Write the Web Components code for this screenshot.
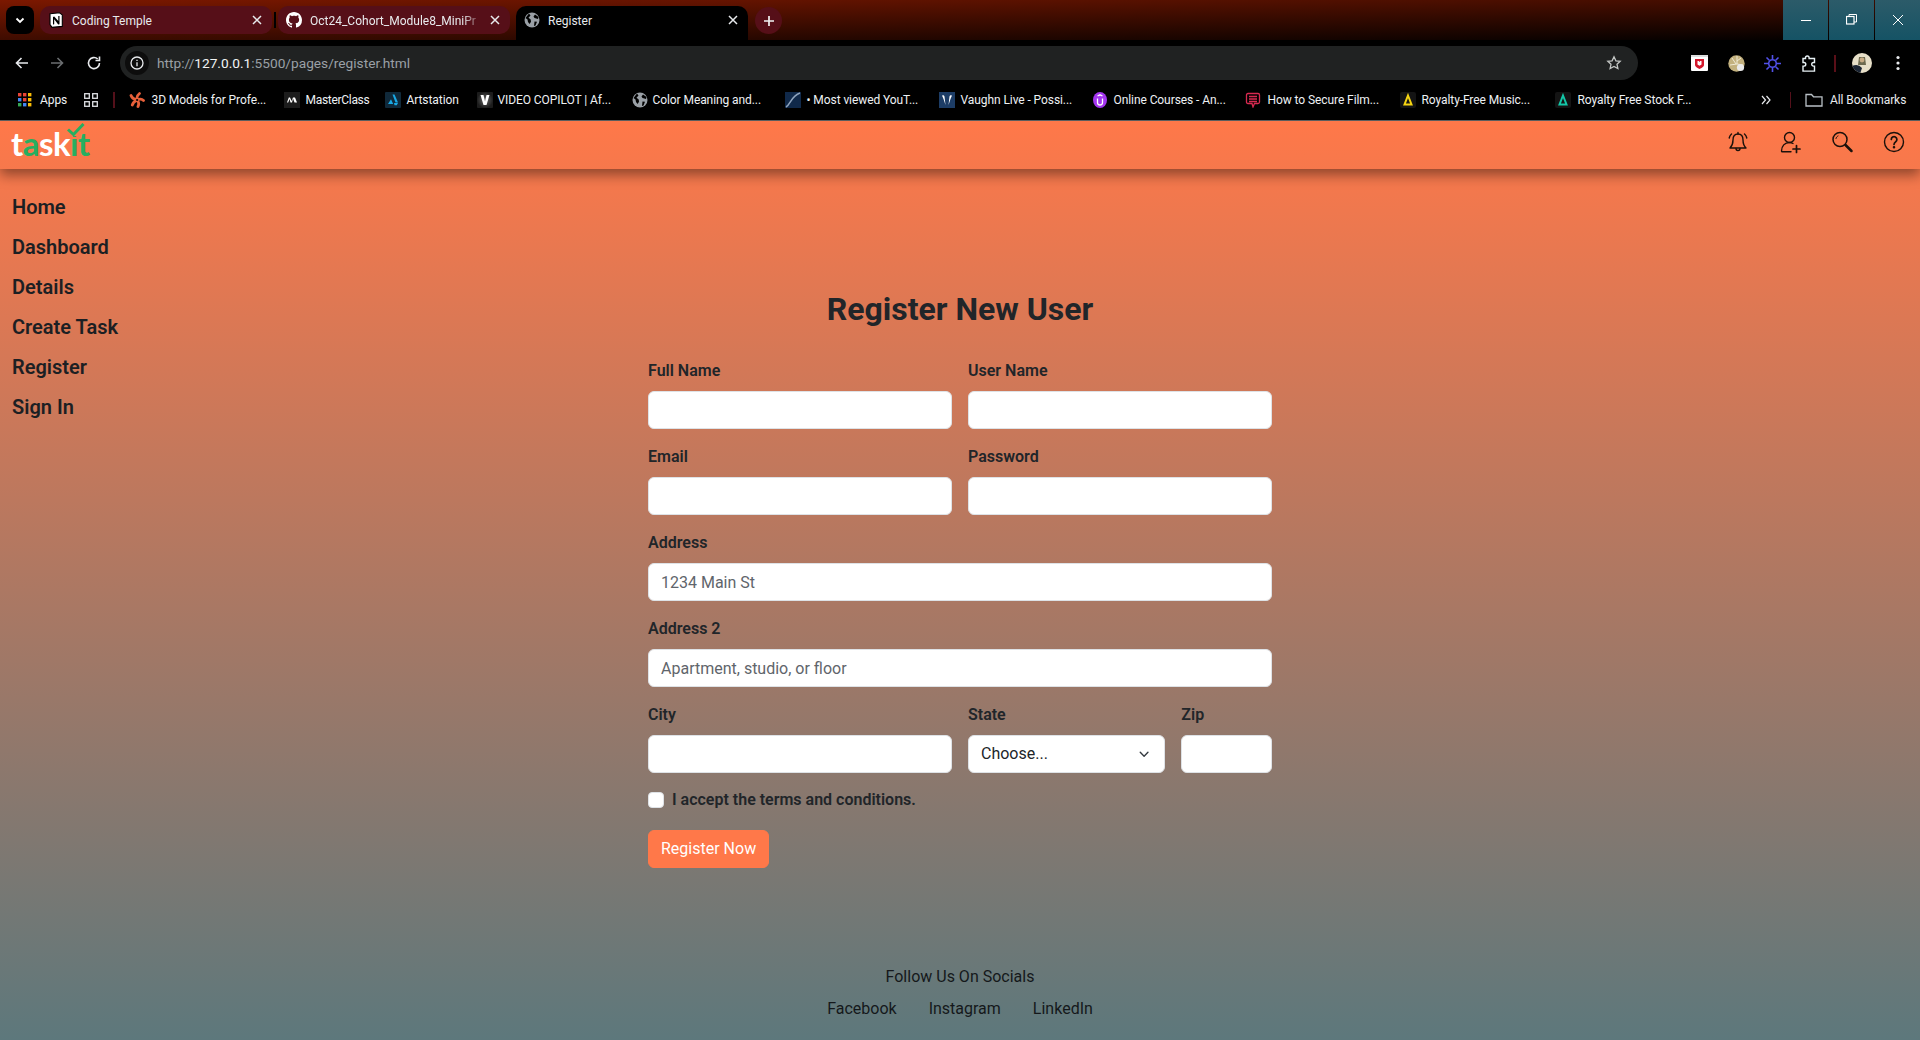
<!DOCTYPE html>
<html lang="en">
<head>
<meta charset="utf-8">
<title>Register</title>
<style>
html,body{margin:0;padding:0;height:100%;}
body{width:1920px;height:1040px;overflow:hidden;display:flex;flex-direction:column;background:#000;font-family:Roboto,"Liberation Sans",sans-serif;}
</style>
</head>
<body>
<browser-chrome></browser-chrome>
<site-page>
  <site-nav slot="nav"></site-nav>
  <side-menu slot="side"></side-menu>
  <register-form slot="main"></register-form>
  <site-footer slot="foot"></site-footer>
</site-page>
<script>
const ui='Roboto,"Liberation Sans",sans-serif';
function define(name,html,cls){
  const t=document.createElement('template');t.innerHTML=html;
  customElements.define(name,class extends HTMLElement{
    constructor(){super();this.attachShadow({mode:'open'}).appendChild(t.content.cloneNode(true));}
  });
}

const globe=(c='#9aa0a6',k='#000')=>`<svg width="16" height="16" viewBox="0 0 16 16" style="flex:none"><circle cx="8" cy="8" r="7.5" fill="${c}"/><path d="M5 1.500l1.500 2-2 2.200 2.200 1.800.3 2.200-1.400 2.300-1.600-2-.5-2.500L1.500 6zM11 2.500l-1.500 2 1 1.500 3.500 1 .5-2zM10.500 9.500l2.500.3-1.500 3.700-1.500.5z" fill="${k}"/></svg>`;

function bm(icon,text,iw,tw,gap,ml,ls){
  return `<a class="bm" style="margin-left:${ml}px"><span class="ic" style="width:${iw}px">${icon}</span>${text?`<span class="tx" style="margin-left:${gap}px;width:${tw}px${ls?';letter-spacing:'+ls+'px':''}">${text}</span>`:''}</a>`;
}
const appsIcon=`<svg width="14" height="14" viewBox="0 0 14 14">${[['#ea4335',0,0],['#ea4335',5,0],['#fbbc04',10,0],['#4285f4',0,5],['#ea4335',5,5],['#fbbc04',10,5],['#34a853',0,10],['#4285f4',5,10],['#fbbc04',10,10]].map(a=>`<rect x="${a[1]}" y="${a[2]}" width="3.4" height="3.4" fill="${a[0]}"/>`).join('')}</svg>`;
const gridIcon=`<svg width="14" height="14" viewBox="0 0 14 14" fill="none" stroke="#dfe1e5" stroke-width="1.3"><rect x=".7" y=".7" width="4.6" height="4.6"/><rect x="8.7" y=".7" width="4.6" height="4.6"/><rect x=".7" y="8.700" width="4.6" height="4.6"/><rect x="8.7" y="8.700" width="4.6" height="4.6"/></svg>`;
const starfish=`<svg width="16" height="16" viewBox="0 0 16 16" fill="none" stroke="#e8603a" stroke-width="2.800" stroke-linecap="round"><path d="M8 7.500C7.500 5 8.500 3 10.500 1.500M8.500 8c2.500-1.500 4.500-1 6 .5M8.500 8.500c1.500 2 1.500 4 .5 6M7.500 8.500c-2 .8-3.500 2.200-4.200 4.500M7.500 8C5.500 7.500 3 6 2 3.500"/><circle cx="8" cy="8" r=".6" stroke="#000" stroke-width="1"/></svg>`;
const mc=`<svg width="16" height="16" viewBox="0 0 16 16"><rect width="16" height="16" fill="#1c1c1c"/><path d="M3 10.500h1.200L5.500 7l1 3.500h1.500L9 6.500l1.500 4H13L11 5.500h-2L7.500 9 6 5.500H4.800z" fill="#fff"/></svg>`;
const art=`<svg width="16" height="16" viewBox="0 0 16 16"><rect width="16" height="16" rx="1" fill="#10293a"/><path d="M7.500 2.500h2l3.500 8h-2.500zM3 12l3-4.700 2.200 4.700zM9 11h4l-1.200 2.300H9.500z" fill="#19a9e5"/></svg>`;
const vc=`<svg width="16" height="16" viewBox="0 0 16 16"><defs><radialGradient id="vg"><stop offset="0" stop-color="#6a6a6a"/><stop offset="1" stop-color="#1c1c1c"/></radialGradient></defs><rect width="16" height="16" rx="1" fill="url(#vg)"/><path d="M3.500 3h3L8 9.500 9.500 3h3L9.500 13h-3z" fill="#fff"/></svg>`;
const chart=`<svg width="16" height="16" viewBox="0 0 16 16"><rect width="16" height="16" fill="#10294a"/><path d="M1 15C6 12 6 4 15 1" fill="none" stroke="#8fa4bd" stroke-width="1.500"/></svg>`;
const vl=`<svg width="16" height="16" viewBox="0 0 16 16"><rect width="16" height="16" fill="#1d3d66"/><path d="M3 3.500q2-1 2.500 1L6.500 13 4.500 7zM13 3.500q-2-1-2.500 1L9.500 13l2-6z" fill="#fff"/></svg>`;
const udemy=`<svg width="14" height="16" viewBox="0 0 14 16"><ellipse cx="7" cy="8" rx="7" ry="8" fill="#a435f0"/><path d="M4.500 6.500v4a2.500 2.500 0 0 0 5 0v-4M4.500 4L7 2.800 9.500 4" fill="none" stroke="#fff" stroke-width="1.300"/></svg>`;
const secure=`<svg width="16" height="16" viewBox="0 0 16 16" fill="none" stroke="#d72a50" stroke-width="1.300"><path d="M3 1.500h10q1.500 0 1.500 1.500v7q0 1.500-1.500 1.500H9.500L8 15l-1-3.500H3q-1.500 0-1.500-1.500V3q0-1.500 1.500-1.500zM4 4.500h8M4 7h8M4 9.500h8"/></svg>`;
const tri=c=>`<svg width="16" height="16" viewBox="0 0 16 16"><rect width="16" height="16" rx="2" fill="#141414"/><path d="M8 3.500l3.500 9h-7z" fill="none" stroke="${c}" stroke-width="2"/></svg>`;
const closeX=`<svg width="10" height="10" viewBox="0 0 10 10" stroke="#e8eaed" stroke-width="1.500"><path d="M1 1l8 8M9 1l-8 8"/></svg>`;

define('browser-chrome',`
<style>
:host{display:block;flex:none;font-family:${ui};color:#e8eaed;background:#000;height:120px;}
.strip{height:40px;display:flex;background:linear-gradient(to bottom right,#7c1800,#000);}
.chev{width:28px;height:28px;margin:6px 6px 0 6px;background:#000;border-radius:8px;display:flex;align-items:center;justify-content:center;flex:none;}
.tab{width:232px;height:28px;margin-top:6px;background:#560f18;border-radius:10px;display:flex;align-items:center;box-sizing:border-box;padding:0 0 0 8px;font-size:12px;flex:none;}
.tab .t{margin-left:8px;flex:1;white-space:nowrap;min-width:0;padding-top:1px;}
.tab .fade{-webkit-mask-image:linear-gradient(to right,#000 88%,transparent 100%);mask-image:linear-gradient(to right,#000 88%,transparent 100%);}
.tab .x{width:24px;display:flex;justify-content:center;flex:none;margin-right:3px;}
.sep{width:2px;height:16px;background:#000;margin:12px 2px 0 2px;flex:none;}
.tab.active{background:#000;height:34px;border-radius:10px 10px 0 0;margin-left:6px;align-items:flex-start;}
.tab.active .inner{display:flex;align-items:center;width:100%;height:28px;}
.plus{width:27px;height:27px;margin:7px 0 0 7px;border-radius:50%;background:#560f18;display:flex;align-items:center;justify-content:center;flex:none;}
.fill{flex:1;}
.win{width:45px;margin-left:1px;height:40px;background:linear-gradient(#2c5b69,#155365);display:flex;align-items:center;justify-content:center;flex:none;}
.bar{height:40px;display:flex;align-items:flex-start;background:#000;}
.nb{width:24px;height:24px;margin-top:11px;display:flex;align-items:center;justify-content:center;flex:none;}
.url{width:1518px;height:34px;margin:6px 0 0 14px;background:#202222;border-radius:17px;display:flex;align-items:center;flex:none;box-sizing:border-box;padding:0 16px 0 5px;font-size:13.7px;color:#9aa0a6;}
.url .info{width:24px;height:24px;border-radius:50%;background:#0d0d0d;display:flex;align-items:center;justify-content:center;flex:none;margin-right:8px;}
.url b{font-weight:400;color:#f1f3f4;}
.url .addr{flex:1;white-space:nowrap;}
.ext{height:46px;display:flex;align-items:center;margin-left:53px;}
.ext>*{flex:none;}
.marks{height:40px;display:flex;align-items:center;background:#000;font-size:12px;letter-spacing:-.08px;box-sizing:border-box;padding-left:18px;}
.bm{display:flex;align-items:center;flex:none;color:#eef1f4;}
.ic{display:flex;align-items:center;justify-content:center;flex:none;}
.tx{white-space:nowrap;display:block;flex:none;}
.vsep{width:1.500px;height:16px;background:#54101a;flex:none;}
</style>
<div class="strip">
  <div class="chev"><svg width="12" height="12" viewBox="0 0 12 12" fill="none" stroke="#fff" stroke-width="1.800"><path d="M2.500 4.500L6 8l3.500-3.500"/></svg></div>
  <div class="tab"><svg width="16" height="16" viewBox="0 0 16 16" style="flex:none"><path d="M2 1.700l9.500-1 2.800 2.200v11.500l-10.300.9-2-2.800z" fill="#fff" stroke="#000" stroke-width="1.100"/><path d="M5 5v7.500l1.200-.2V7.200l4 5.300 1.300-.2V4l-1.200.1v5L6.200 4.600z" fill="#000"/></svg><span class="t">Coding Temple</span><span class="x">${closeX}</span></div>
  <div class="sep"></div>
  <div class="tab" style="margin-left:0"><svg width="16" height="16" viewBox="0 0 16 16" style="flex:none"><path fill="#fff" d="M8 0C3.580 0 0 3.580 0 8c0 3.540 2.290 6.530 5.470 7.590.4.070.55-.17.55-.38 0-.19-.01-.82-.01-1.490-2.010.37-2.530-.49-2.690-.94-.09-.23-.48-.94-.82-1.130-.28-.15-.68-.52-.01-.53.630-.01 1.080.58 1.230.82.720 1.210 1.870.870 2.330.660.070-.520.280-.870.510-1.070-1.780-.2-3.640-.89-3.640-3.950 0-.870.310-1.590.820-2.150-.080-.2-.360-1.020.080-2.120 0 0 .670-.210 2.200.820.640-.180 1.320-.270 2-.270s1.360.090 2 .270c1.530-1.040 2.200-.820 2.200-.820.440 1.100.160 1.920.080 2.120.510.560.820 1.270.820 2.150 0 3.070-1.870 3.750-3.650 3.950.290.250.540.730.540 1.480 0 1.070-.010 1.930-.010 2.200 0 .210.150.460.550.380A8.010 8.010 0 0 0 16 8c0-4.420-3.580-8-8-8z"/></svg><span class="t fade">Oct24_Cohort_Module8_MiniPr</span><span class="x">${closeX}</span></div>
  <div class="tab active"><div class="inner">${globe()}<span class="t">Register</span><span class="x">${closeX}</span></div></div>
  <div class="plus"><svg width="12" height="12" viewBox="0 0 12 12" stroke="#f1f3f4" stroke-width="1.700"><path d="M6 1v10M1 6h10"/></svg></div>
  <div class="fill"></div>
  <div class="win" style="margin-left:0"><svg width="12" height="12" viewBox="0 0 12 12" stroke="#fff" stroke-width="1"><path d="M1 6.500h10"/></svg></div>
  <div class="win"><svg width="12" height="12" viewBox="0 0 12 12" fill="none" stroke="#fff" stroke-width="1"><rect x=".5" y="2.500" width="7.500" height="7.500" stroke-width="1.200"/><path d="M3 2.500V.5h7.500V8H8"/></svg></div>
  <div class="win"><svg width="12" height="12" viewBox="0 0 12 12" stroke="#fff" stroke-width="1"><path d="M1 1l10 10M11 1L1 11"/></svg></div>
</div>
<div class="bar">
  <div class="nb" style="margin-left:10px"><svg width="16" height="16" viewBox="0 0 16 16" fill="none" stroke="#e8eaed" stroke-width="1.600"><path d="M14 8H2.500M7.500 3L2.500 8l5 5"/></svg></div>
  <div class="nb" style="margin-left:11px"><svg width="16" height="16" viewBox="0 0 16 16" fill="none" stroke="#6b6e70" stroke-width="1.600"><path d="M2 8h11.500M8.500 3l5 5-5 5"/></svg></div>
  <div class="nb" style="margin-left:13px"><svg width="16" height="16" viewBox="0 0 16 16" fill="none" stroke="#e8eaed" stroke-width="1.600"><path d="M13.500 8A5.500 5.500 0 1 1 11.700 4"/><path d="M13.500 1.500v4h-4" /></svg></div>
  <div class="url">
    <span class="info"><svg width="14" height="14" viewBox="0 0 14 14" fill="none" stroke="#e8eaed" stroke-width="1.300"><circle cx="7" cy="7" r="6"/><path d="M7 6.200v4M7 3.800v1.200"/></svg></span>
    <span class="addr">http://<b>127.0.0.1</b>:5500/pages/register.html</span>
    <svg width="16" height="16" viewBox="0 0 16 16" fill="none" stroke="#c4c7c5" stroke-width="1.300"><path d="M8 1.800l1.900 4 4.300.5-3.200 3 .9 4.300L8 11.500l-3.900 2.100.9-4.300-3.200-3 4.300-.5z"/></svg>
  </div>
  <div class="ext">
    <svg width="18" height="18" viewBox="0 0 18 18"><rect y="1" width="17" height="16" rx="1" fill="#fff"/><rect y="1" width="17" height="2" fill="#ddd"/><path d="M4 5h9v6q0 2-4.500 4Q4 13 4 11z" fill="#d3182c"/><path d="M6.500 7h1.200l.8 1 .8-1h1.200v3.500l-2 1.200-2-1.200z" fill="#fff"/></svg>
    <svg style="margin-left:19px" width="17" height="17" viewBox="0 0 17 17"><circle cx="8.500" cy="8.500" r="8.200" fill="#c3b17e"/><path d="M9 1v8M9 6l4-3M9 9l6 1M4 3l4 6M2 10l7-1" stroke="#efe9d3" stroke-width="1" fill="none"/><circle cx="12.500" cy="12.500" r="3.600" fill="#e9e9e9"/></svg>
    <svg style="margin-left:19px" width="17" height="17" viewBox="0 0 17 17" fill="none" stroke="#5151e8" stroke-width="1.600"><circle cx="8.500" cy="8.500" r="3.800"/><path d="M8.500 0v4M8.500 13v4M0 8.500h4M13 8.500h4M2.500 2.500l2.800 2.800M11.700 11.700l2.800 2.800M14.500 2.500l-2.800 2.800M5.300 11.700l-2.800 2.800"/></svg>
    <svg style="margin-left:20px" width="16" height="17" viewBox="0 0 16 17" fill="none" stroke="#e8f1f5" stroke-width="1.400"><path d="M5 3.500V2.800a1.800 1.800 0 0 1 3.600 0v.7h5.400v4h-1a1.800 1.800 0 0 0 0 3.600h1v5H2.500v-5h1a1.800 1.800 0 0 0 0-3.600h-1v-4z" transform="translate(-.5 0)"/></svg>
    <span class="vsep" style="margin-left:17px;height:17px;background:#5a0f18"></span>
    <svg style="margin-left:16px" width="20" height="20" viewBox="0 0 20 20"><defs><clipPath id="av"><circle cx="10" cy="10" r="10"/></clipPath></defs><g clip-path="url(#av)"><rect width="20" height="20" fill="#e7dfc8"/><path d="M7 4h6l1 8H6z" fill="#6d6a4f"/><path d="M0 13q6-3 10 2l-2 6H0z" fill="#1a2433"/><circle cx="10" cy="7" r="2.400" fill="#c8ab84"/></g></svg>
    <svg style="margin-left:24px" width="4" height="16" viewBox="0 0 4 16" fill="#e8eaed"><circle cx="2" cy="2.500" r="1.600"/><circle cx="2" cy="8" r="1.600"/><circle cx="2" cy="13.500" r="1.600"/></svg>
  </div>
</div>
<div class="marks">
  ${bm(appsIcon,'Apps',14,30,8,0)}
  ${bm(gridIcon,'',14,0,0,14)}
  <span class="vsep" style="margin-left:15px"></span>
  ${bm(starfish,'3D Models for Profe...',16,120,7,14)}
  ${bm(mc,'MasterClass',16,64,6,12,-.3)}
  ${bm(art,'Artstation',16,60,6,15)}
  ${bm(vc,'VIDEO COPILOT | Af...',16,120,5,10)}
  ${bm(globe('#9aa0a6','#000'),'Color Meaning and...',16,118,5,14)}
  ${bm(chart,'• Most viewed YouT...',16,118,6,14)}
  ${bm(vl,'Vaughn Live - Possi...',16,115,6,14)}
  ${bm(udemy,'Online Courses - An...',14,118,7,17)}
  ${bm(secure,'How to Secure Film...',16,116,7,13)}
  ${bm(tri('#f5d412'),'Royalty-Free Music...',16,115,6,16)}
  ${bm(tri('#13c7a8'),'Royalty Free Stock F...',16,118,7,18)}
  <svg style="margin-left:65px;flex:none" width="10" height="10" viewBox="0 0 10 10" fill="none" stroke="#e8eaed" stroke-width="1.200"><path d="M1 1l3.500 4L1 9M5.500 1L9 5 5.500 9"/></svg>
  <span class="vsep" style="margin-left:19px"></span>
  <svg style="margin-left:14px;flex:none" width="18" height="16" viewBox="0 0 18 16" fill="none" stroke="#b9c0c6" stroke-width="1.300"><path d="M1 2.500h5.500l2 2.300H17V14H1z"/></svg>
  <span class="tx" style="margin-left:7px">All Bookmarks</span>
</div>
`);

define('site-page',`
<style>
:host{display:grid;flex:1;min-height:0;grid-template-columns:1fr 624px 1fr;grid-template-rows:49px 1fr auto;background:linear-gradient(#ff7849,#5d787c);color:#212529;font-family:${ui};}
::slotted([slot=nav]){grid-column:1/4;grid-row:1;}
::slotted([slot=side]){grid-column:1;grid-row:2;}
::slotted([slot=main]){grid-column:2;grid-row:2;}
::slotted([slot=foot]){grid-column:1/4;grid-row:3;}
</style>
<slot name="nav"></slot><slot name="side"></slot><slot name="main"></slot><slot name="foot"></slot>
`);

define('site-nav',`
<style>
:host{display:flex;align-items:center;justify-content:space-between;position:relative;box-shadow:0 6px 12px rgba(0,0,0,.42);border-top:1px solid #5c5c5c;box-sizing:border-box;}
.logo{position:relative;margin-left:11px;margin-top:-5px;font:700 33px/40px Lato,sans-serif;letter-spacing:-.55px;color:#fff;display:block;white-space:nowrap;}
.g{color:#27ae60;}
.dotless{display:inline-block;clip-path:inset(34% 0 0 0);}
.check{position:absolute;left:56px;top:0;}
.icons{display:flex;gap:28px;margin-right:14px;margin-top:-6px;}
svg.i{display:block;}
</style>
<div class="logo">t<span class="g">a</span>sk<span class="g"><span class="dotless">i</span>t</span><svg class="check" width="18" height="14" viewBox="0 0 18 14" fill="none" stroke="#27ae60" stroke-width="3"><path d="M1 6.500l5.500 5L16.500 1"/></svg></div>
<div class="icons">
  <svg class="i" width="24" height="24" viewBox="0 0 24 24" fill="none" stroke="#1c110b" stroke-width="1.400" stroke-linecap="round" stroke-linejoin="round"><path d="M12 4C8.600 4 7 6.800 7 10c0 4-1 6-3 8h16c-2-2-3-4-3-8 0-3.200-1.600-6-5-6z"/><path d="M12 2.500V4M10 18.500a2 2 0 0 0 4 0"/><path d="M3.200 8c.4-1.700 1.200-3 2.300-4M20.800 8c-.4-1.700-1.200-3-2.300-4"/></svg>
  <svg class="i" width="24" height="24" viewBox="0 0 24 24" fill="none" stroke="#1c110b" stroke-width="1.400" stroke-linecap="round" stroke-linejoin="round"><circle cx="11.500" cy="7.500" r="5"/><path d="M15 13.500c-1-.6-2.200-1-3.500-1-4.700 0-8 3.500-8 8.500 0 .5.300.8.800.8H13"/><path d="M18.500 15.500v7M15 19h7" stroke-width="1.700"/></svg>
  <svg class="i" width="24" height="24" viewBox="0 0 24 24" fill="none" stroke="#1c110b" stroke-width="1.500" stroke-linecap="round"><circle cx="10" cy="9.500" r="7"/><path d="M15.500 15l6 6" stroke-width="2.500"/><path d="M6 8.500c.4-1.400 1-2 2-2.500" stroke-width="1" /></svg>
  <svg class="i" width="24" height="24" viewBox="0 0 24 24" fill="none" stroke="#1c110b" stroke-width="1.400" stroke-linecap="round"><circle cx="12" cy="12" r="9.500"/><path d="M9.300 9.500a2.800 2.800 0 1 1 4.400 2.200c-1.100.8-1.700 1.400-1.700 2.800" stroke-width="1.700"/><circle cx="12" cy="17.200" r=".6" fill="#1c110b"/></svg>
</div>
`);

define('side-menu',`
<style>
:host{display:flex;flex-direction:column;padding:18px 0 0 12px;font:600 20px/40px ${ui};color:#1c1f23;}
a{display:block;color:inherit;text-decoration:none;}
</style>
<a>Home</a><a>Dashboard</a><a>Details</a><a>Create Task</a><a>Register</a><a>Sign In</a>
`);

define('form-field',`
<style>
:host{display:flex;flex-direction:column;min-width:0;}
label{font:600 16px/24px ${ui};color:#212529;margin-bottom:8px;}
</style>
<label><slot name="label"></slot></label><slot></slot>
`);

define('text-box',`
<style>
:host{display:flex;box-sizing:border-box;height:38px;}
input{flex:1;min-width:0;box-sizing:border-box;height:38px;border:1px solid #dee2e6;border-radius:6px;background:#fff;padding:6px 12px;font:400 16px/24px ${ui};color:#212529;outline:none;}
input::placeholder{color:#5f656b;opacity:1;}
</style>
<input type="text">
`);

define('register-form',`
<style>
:host{display:flex;flex-direction:column;padding-top:121px;color:#212529;}
h1{margin:0 0 31px;font:700 32px/38px ${ui};text-align:center;color:#212529;}
.grid{display:grid;grid-template-columns:repeat(12,1fr);column-gap:16px;row-gap:16px;}
.c6{grid-column:span 6;}.c12{grid-column:span 12;}.c4{grid-column:span 4;}.c2{grid-column:span 2;}
.sel{box-sizing:border-box;height:38px;border:1px solid #dee2e6;border-radius:6px;background:#fff;padding:0 12px;display:flex;align-items:center;justify-content:space-between;font:400 16px/24px ${ui};color:#212529;}
.check{display:flex;align-items:center;margin-top:15px;height:24px;font:600 16px/24px ${ui};}
.box{width:16px;height:16px;background:#fff;border:1px solid #dee2e6;border-radius:4px;box-sizing:border-box;margin-right:8px;flex:none;}
button{align-self:flex-start;margin-top:18px;height:38px;box-sizing:border-box;padding:0 12px;border:1px solid #ff7849;border-radius:6px;background:#ff7849;color:#fff;font:400 16px/24px ${ui};}
</style>
<h1>Register New User</h1>
<div class="grid">
  <form-field class="c6"><span slot="label">Full Name</span><text-box></text-box></form-field>
  <form-field class="c6"><span slot="label">User Name</span><text-box></text-box></form-field>
  <form-field class="c6"><span slot="label">Email</span><text-box></text-box></form-field>
  <form-field class="c6"><span slot="label">Password</span><text-box></text-box></form-field>
  <form-field class="c12"><span slot="label">Address</span><text-box placeholder="1234 Main St"></text-box></form-field>
  <form-field class="c12"><span slot="label">Address 2</span><text-box placeholder="Apartment, studio, or floor"></text-box></form-field>
  <form-field class="c6"><span slot="label">City</span><text-box></text-box></form-field>
  <form-field class="c4"><span slot="label">State</span><div class="sel"><span>Choose...</span><svg width="16" height="16" viewBox="0 0 16 16" fill="none" stroke="#343a40" stroke-width="2" stroke-linecap="round" stroke-linejoin="round"><path d="M2.500 5.500L8 11l5.500-5.500" transform="translate(2.500 2.500) scale(.7)"/></svg></div></form-field>
  <form-field class="c2"><span slot="label">Zip</span><text-box></text-box></form-field>
</div>
<div class="check"><span class="box"></span><span>I accept the terms and conditions.</span></div>
<button>Register Now</button>
`);

define('site-footer',`
<style>
:host{display:flex;flex-direction:column;align-items:center;height:75px;font:400 16px/24px ${ui};color:#15181b;gap:8px;}
.links{display:flex;gap:32px;}
</style>
<div>Follow Us On Socials</div>
<div class="links"><a>Facebook</a><a>Instagram</a><a>LinkedIn</a></div>
`);

document.querySelectorAll('register-form').forEach(f=>{
  f.shadowRoot.querySelectorAll('text-box[placeholder]').forEach(b=>{
    b.shadowRoot.querySelector('input').placeholder=b.getAttribute('placeholder');
  });
});
</script>
</body>
</html>
